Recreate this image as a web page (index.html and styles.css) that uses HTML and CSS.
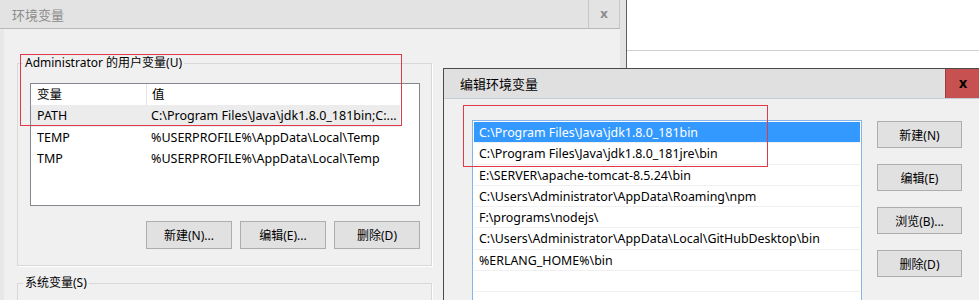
FILE: index.html
```html
<!DOCTYPE html>
<html>
<head>
    <meta charset="utf-8" />
    <title>编辑环境变量</title>
    <link rel="stylesheet" href="styles.css">
</head>
<body>
    <div class="screen">
        <div class="env">
            <div class="env-main">
                <div class="env-title">
                    <span class="env-caption">环境变量</span>
                    <span class="env-close">x</span>
                </div>
                <div class="env-body">
                    <fieldset class="group user">
                        <legend>Administrator 的用户变量(U)</legend>
                        <div class="listview">
                            <div class="lv-head"><span class="c1">变量</span><span class="c2">值</span></div>
                            <div class="lv-row sel"><span class="c1">PATH</span><span class="c2">C:\Program Files\Java\jdk1.8.0_181bin;C:...</span></div>
                            <div class="lv-row"><span class="c1">TEMP</span><span class="c2">%USERPROFILE%\AppData\Local\Temp</span></div>
                            <div class="lv-row"><span class="c1">TMP</span><span class="c2">%USERPROFILE%\AppData\Local\Temp</span></div>
                        </div>
                        <div class="btns">
                            <button class="btn">新建(N)...</button>
                            <button class="btn">编辑(E)...</button>
                            <button class="btn">删除(D)</button>
                        </div>
                    </fieldset>
                    <fieldset class="group sys">
                        <legend>系统变量(S)</legend>
                    </fieldset>
                </div>
            </div>
        </div>
        <div class="desk">
            <div class="desk-line"></div>
        </div>

        <!-- 前面的对话框 -->
        <div class="edit">
            <div class="edit-title">
                <span class="edit-caption">编辑环境变量</span>
                <span class="edit-close">x</span>
            </div>
            <div class="edit-body">
                <ul class="listbox">
                    <li class="sel">C:\Program Files\Java\jdk1.8.0_181bin</li>
                    <li>C:\Program Files\Java\jdk1.8.0_181jre\bin</li>
                    <li>E:\SERVER\apache-tomcat-8.5.24\bin</li>
                    <li>C:\Users\Administrator\AppData\Roaming\npm</li>
                    <li>F:\programs\nodejs\</li>
                    <li>C:\Users\Administrator\AppData\Local\GitHubDesktop\bin</li>
                    <li>%ERLANG_HOME%\bin</li>
                    <li></li>
                    <li></li>
                </ul>
                <div class="side">
                    <button class="btn">新建(N)</button>
                    <button class="btn">编辑(E)</button>
                    <button class="btn">浏览(B)...</button>
                    <button class="btn">删除(D)</button>
                </div>
            </div>
        </div>

        <!-- 红框标注 -->
        <div class="mark mark-a"></div>
        <div class="mark mark-b"></div>
    </div>
</body>
</html>
```

FILE: styles.css
```css
body {
    margin: 0;
    background: #fff;
    font-family: "Noto Sans", "Noto Sans CJK SC", sans-serif;
    font-size: 12px;
    color: #000;
}

.screen {
    position: relative;
    width: 979px;
    height: 300px;
    overflow: hidden;
    display: flex;
}

/* 后面的 环境变量 对话框 */
.env {
    width: 626px;
    border-right: 1px solid #5f5f5f;
    flex: none;
}

.env-main {
    height: 300px;
    border-right: 6px solid #e4e4e4;
    display: flex;
    flex-direction: column;
}

.env-title {
    height: 28px;
    background: #e3e3e3;
    border-bottom: 1px solid #b8b8b8;
    display: flex;
    align-items: center;
}

    .env-caption {
        color: #8c8c8c;
        padding-left: 12px;
        flex: 1;
        font-size: 13px;
    }

    .env-close {
        width: 30px;
        height: 28px;
        border-left: 1px solid #c8c8c8;
        border-right: 1px solid #c8c8c8;
        color: #8a8a8a;
        font-weight: bold;
        text-align: center;
        line-height: 26px;
        font-size: 13px;
    }

.env-body {
    flex: 1;
    background: #f0f0f0;
    border-left: 4px solid #e8e8e8;
    padding: 26px 0 0 13px;
}

.group {
    box-sizing: border-box;
    margin: 0;
    width: 415px;
    border: 1px solid #d8d8d8;
    box-shadow: 1px 1px 0 #fff;
    padding: 0 11px 16px 12px;
}

    .group legend {
        padding: 0 2px;
        margin-left: -7px;
        line-height: 16px;
    }

.sys {
    margin-top: 9px;
}

.listview {
    margin-top: 12px;
    height: 121px;
    background: #fff;
    border: 1px solid #828790;
    font-size: 12.5px;
}

.lv-head,
.lv-row {
    display: flex;
    height: 21px;
    line-height: 21px;
}

    .lv-head .c1 {
        border-right: 1px solid #e5e5e5;
    }

.lv-row {
    height: 21.5px;
    line-height: 21.5px;
    width: 369px;
}

    .lv-row.sel {
        background: #ececec;
    }

.c1 {
    width: 109px;
    padding-left: 6px;
}

.c2 {
    padding-left: 5px;
    white-space: nowrap;
}

.btns {
    margin-top: 15px;
    display: flex;
    justify-content: flex-end;
    gap: 8px;
}

.btn {
    width: 86px;
    height: 28px;
    margin: 0;
    padding: 0;
    background: #e1e1e1;
    border: 1px solid #adadad;
    font-family: inherit;
    font-size: 12px;
    color: #000;
}

/* 右边桌面 */
.desk {
    flex: 1;
    padding-top: 50px;
}

.desk-line {
    height: 1px;
    background: #d0d0d0;
}

/* 编辑环境变量 对话框 */
.edit {
    position: absolute;
    left: 443px;
    top: 68px;
    width: 536px;
    height: 240px;
    border-top: 1px solid #4a4a4a;
    border-left: 1px solid #4a4a4a;
    background: #f0f0f0;
}

.edit-title {
    height: 29px;
    background: #e0e0e0;
    border-bottom: 1px solid #c3ced8;
    display: flex;
    align-items: center;
}

    .edit-caption {
        flex: 1;
        padding-left: 16px;
        font-size: 13px;
    }

    .edit-close {
        width: 34px;
        height: 29px;
        background: #c75050;
        border-left: 1px solid #9b3c3c;
        text-align: center;
        line-height: 27px;
        font-weight: bold;
        font-size: 14px;
    }

.edit-body {
    display: flex;
    align-items: flex-start;
    padding: 21px 0 0 28px;
}

.listbox {
    list-style: none;
    margin: 0;
    padding: 1px;
    width: 386px;
    height: 200px;
    background: #fff;
    border: 1px solid #86b4e6;
    font-size: 12.4px;
}

    .listbox li {
        height: 20.3px;
        line-height: 21px;
        padding-left: 5px;
        border-bottom: 1px solid #f0f0f0;
        white-space: nowrap;
    }

        .listbox li.sel {
            background: #3399ff;
            color: #fff;
        }

.side {
    margin-left: 15px;
    margin-top: 1px;
    display: flex;
    flex-direction: column;
    gap: 16px;
}

    .side .btn {
        width: 85px;
        height: 27px;
    }

/* 红框 */
.mark {
    position: absolute;
    border: 1px solid #e2394a;
}

.mark-a {
    left: 20px;
    top: 54px;
    width: 380px;
    height: 70px;
}

.mark-b {
    left: 463px;
    top: 105px;
    width: 303px;
    height: 60px;
}
```
